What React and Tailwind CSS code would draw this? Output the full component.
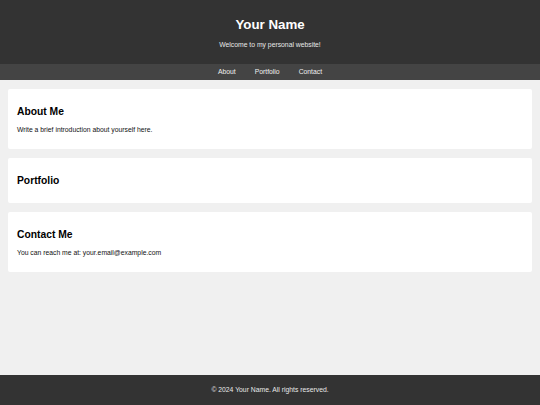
const sections = [
  { title: "About Me", text: "Write a brief introduction about yourself here." },
  { title: "Portfolio", text: null },
  { title: "Contact Me", text: "You can reach me at: your.email@example.com" },
];

const App = () => {
  return (
    <div className="min-h-screen bg-[#f0f0f0] font-['Liberation_Sans',Arial,sans-serif]">
      {/* HEADER */}
      <header className="h-[64px] bg-[#333] pt-[17px] text-center">
        <h1 className="text-[13.3px] leading-[15px] font-bold text-white">Your Name</h1>
        <p className="mt-[9px] text-[6.8px] leading-[8px] text-[#e8e8e8]">
          Welcome to my personal website!
        </p>
      </header>

      {/* NAV */}
      <nav className="h-[16px] bg-[#444] flex items-center justify-center gap-[19px] text-[6.8px] text-[#f0f0f0]">
        <a href="#about">About</a>
        <a href="#portfolio">Portfolio</a>
        <a href="#contact">Contact</a>
      </nav>

      {/* SECTIONS */}
      <main className="px-[8px] pt-[9px] flex flex-col gap-[9px]">
        {sections.map((s) => (
          <section key={s.title} className="bg-white rounded-[2px] py-[8px] px-[9px]">
            <h2 className="mt-[9px] mb-[8px] text-[10.3px] leading-[12px] font-bold text-black">{s.title}</h2>
            {s.text && (
              <p className="my-[7px] text-[6.8px] leading-[8px] text-[#111]">{s.text}</p>
            )}
          </section>
        ))}
      </main>

      {/* FOOTER */}
      <footer className="fixed bottom-0 left-0 w-full h-[30px] bg-[#333] flex items-center justify-center text-[6.8px] text-[#e8e8e8]">
        © 2024 Your Name. All rights reserved.
      </footer>
    </div>
  );
};

export default App;
